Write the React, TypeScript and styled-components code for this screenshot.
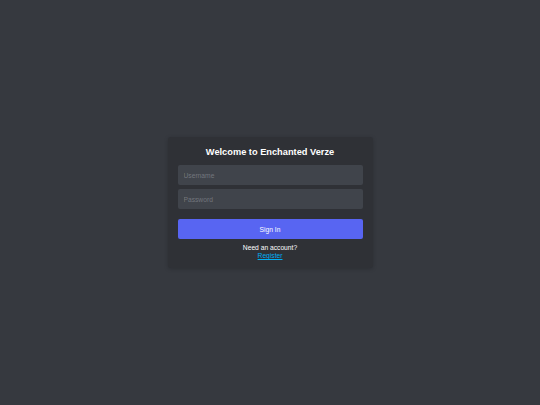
import React from "react";
import styled, { createGlobalStyle } from "styled-components";

const Global = createGlobalStyle`
  html, body { margin: 0; padding: 0; background: #36393f; }
  body { font-family: "Liberation Sans", Arial, sans-serif; }
  * { box-sizing: border-box; }
`;

const Page = styled.div`
  min-height: 100vh;
  display: flex;
  align-items: center;
  justify-content: center;
  background: #36393f;
`;

const Card = styled.form`
  width: 205px;
  height: 131px;
  padding: 10px 10px 8px;
  background: #2f3136;
  border-radius: 3px;
  box-shadow: 0 1px 4px rgba(0, 0, 0, 0.2);
  display: flex;
  flex-direction: column;
`;

const Title = styled.h1`
  margin: 0 0 7px;
  font-size: 9.25px;
  line-height: 11px;
  font-weight: 700;
  color: #ffffff;
  text-align: center;
`;

const Field = styled.input`
  height: 20px;
  width: 100%;
  margin: 0 0 ${(p: { $gap: number }) => p.$gap}px;
  padding: 0 6px;
  border: none;
  border-radius: 2px;
  background: #40444b;
  color: #dcddde;
  font-family: inherit;
  font-size: 6.7px;
  outline: none;
  &::placeholder { color: #72767d; }
`;

const Button = styled.button`
  height: 20px;
  width: 100%;
  border: none;
  border-radius: 2px;
  background: #5865f2;
  color: #ffffff;
  font-family: inherit;
  font-size: 6.7px;
  padding: 0;
`;

const Footer = styled.div`
  margin-top: 5px;
  display: flex;
  flex-direction: column;
  align-items: center;
  font-size: 6.7px;
  line-height: 8px;
  color: #ffffff;
`;

const Link = styled.a`
  color: #00aff4;
  text-decoration: underline;
`;

export default function App() {
  return (
    <>
      <Global />
      <Page>
        <Card onSubmit={(e) => e.preventDefault()}>
          <Title>Welcome to Enchanted Verze</Title>
          <Field $gap={4} placeholder="Username" />
          <Field $gap={10} type="password" placeholder="Password" />
          <Button type="submit">Sign In</Button>
          <Footer>
            <span>Need an account?</span>
            <Link href="#">Register</Link>
          </Footer>
        </Card>
      </Page>
    </>
  );
}
